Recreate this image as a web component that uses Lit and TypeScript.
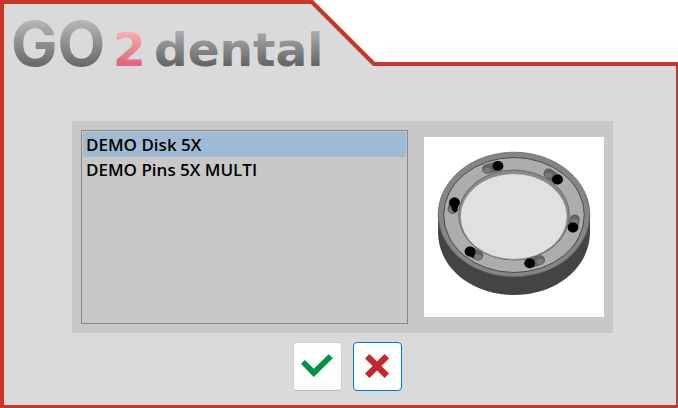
import { LitElement, html, css, svg } from "lit";
import { customElement, property, state } from "lit/decorators.js";

@customElement("brand-logo")
class BrandLogo extends LitElement {
  static styles = css`
    :host { display: block; }
    .logo { display: block; width: 320px; height: 60px; overflow: visible; }
    .word { font-family: "DejaVu Sans", sans-serif; font-weight: 700; }
    .go { font-family: Inter, sans-serif; font-size: 62px; fill: url(#steel); }
    .two { font-size: 47px; fill: url(#rose); }
    .dental { font-size: 47px; fill: url(#steel-low); }
  `;

  render() {
    return html`
      <svg class="logo" viewBox="0 0 320 60" role="img" aria-label="GO2dental">
        <defs>
          <linearGradient id="steel" gradientUnits="userSpaceOnUse" x1="0" y1="9" x2="0" y2="54">
            <stop offset="0" stop-color="#b4b6b8" /><stop offset="1" stop-color="#66686a" />
          </linearGradient>
          <linearGradient id="steel-low" gradientUnits="userSpaceOnUse" x1="0" y1="18" x2="0" y2="54">
            <stop offset="0" stop-color="#acaeb0" /><stop offset="1" stop-color="#626466" />
          </linearGradient>
          <linearGradient id="rose" gradientUnits="userSpaceOnUse" x1="0" y1="20" x2="0" y2="54">
            <stop offset="0" stop-color="#f5b0b0" /><stop offset="1" stop-color="#e2607e" />
          </linearGradient>
        </defs>
        <text class="word go" x="-1" y="54">GO</text>
        <text class="word two" x="101" y="54">2</text>
        <text class="word dental" x="142" y="54">dental</text>
      </svg>
    `;
  }
}

interface Slot {
  from: [number, number];
  pin: [number, number];
}

const SLOTS: Slot[] = [
  { from: [63, 32], pin: [74, 29] },
  { from: [124.5, 36.5], pin: [133.5, 42.5] },
  { from: [28.5, 72], pin: [30.5, 65.5] },
  { from: [150.7, 82.5], pin: [149, 90.5] },
  { from: [54.3, 118.5], pin: [46, 114.5] },
  { from: [116, 123], pin: [105.7, 126.3] },
];

@customElement("disk-preview")
class DiskPreview extends LitElement {
  static styles = css`
    :host { display: block; background: #fff; }
    .disk { display: block; width: 180px; height: 180px; }
    .side { fill: #444; }
    .rim { fill: #858585; stroke: #5c5c5c; stroke-width: 0.7; }
    .face { fill: #adadad; stroke: #4a4a4a; stroke-width: 1; }
    .lip { fill: #8a8a8a; stroke: #6a6a6a; stroke-width: 1; }
    .bore { fill: #e0e0e0; stroke: #777; stroke-width: 0.6; }
    .slot { stroke: #626262; stroke-width: 10; stroke-linecap: round; }
    .floor { fill: #7a7a7a; }
    .pin { fill: #000; }
  `;

  render() {
    return html`
      <svg class="disk" viewBox="0 0 180 180" role="img" aria-label="Disk holder">
        <path class="side" d="M14 77 V95 C14 131 48 158 90 158 C132 158 166 131 166 95 V77 Z" />
        <ellipse class="rim" cx="90" cy="77.5" rx="75.8" ry="62.3" />
        <ellipse class="face" cx="90" cy="78" rx="70.3" ry="57.5" />
        <ellipse class="lip" cx="90" cy="78" rx="55.3" ry="45" />
        <ellipse class="bore" cx="89.7" cy="79.5" rx="53.4" ry="42.9" />
        ${SLOTS.map(
          ({ from, pin }) => svg`
            <line class="slot" x1=${from[0]} y1=${from[1]} x2=${pin[0]} y2=${pin[1]} />
            <ellipse class="floor" cx=${from[0]} cy=${from[1] + 1.5} rx="3.6" ry="2.8" />
            <ellipse class="pin" cx=${pin[0]} cy=${pin[1]} rx="5.4" ry="4.9" />`
        )}
        <path class="pin" d="M27 67 H34 L33.5 74 Q30.5 77 28 73 Z M43 117 L49.5 121 L51 115 Z" />
      </svg>
    `;
  }
}

@customElement("app-root")
class AppRoot extends LitElement {
  @property({ attribute: false }) items = ["DEMO Disk 5X", "DEMO Pins 5X MULTI"];
  @state() private selected = 0;

  static styles = css`
    :host { display: block; --red: #c4372d; }
    * { box-sizing: border-box; }
    .frame {
      min-height: 100vh;
      display: grid;
      padding: 4px 2px 3px 4px;
      background: var(--red);
      clip-path: polygon(0 0, 313px 0, 375px 62px, 100% 62px, 100% 100%, 0 100%);
    }
    .body {
      display: flex;
      flex-direction: column;
      padding: 8px 63px 14px 68px;
      background: #dadada;
      clip-path: polygon(0 0, 307px 0, 369px 62px, 100% 62px, 100% 100%, 0 100%);
    }
    .brand { margin-left: -60px; }
    .panel {
      display: flex;
      gap: 16px;
      margin-top: 49px;
      padding: 9px;
      background: #c8c8c8;
    }
    .list {
      flex: 1;
      min-width: 0;
      height: 194px;
      margin: 0;
      padding: 1px;
      border: 1px solid #828790;
      border-radius: 0;
      outline: none;
      overflow: hidden;
      appearance: none;
      background: #c8c8c8;
      font: 600 17px/25px "Open Sans", "Noto Sans", sans-serif;
      color: #000;
    }
    .item {
      min-height: 25px;
      padding: 1px 3px 0;
      border-radius: 2px;
      font-weight: 600;
      color: #000;
    }
    .item:checked { background: #9fbbd3 linear-gradient(#9fbbd3, #9fbbd3); color: #000; }
    .preview { align-self: center; }
    .actions {
      display: flex;
      justify-content: center;
      gap: 11px;
      margin-top: 9px;
      padding-left: 10px;
    }
    .action {
      width: 49px;
      height: 49px;
      padding: 0;
      border: 1px solid #d0d0d0;
      border-bottom-color: #b8b8b8;
      border-radius: 4px;
      background: #fdfdfd;
    }
    .default { border-color: #0078d4; }
    .glyph { display: block; width: 47px; height: 47px; }
    .ok { fill: #009245; }
    .no { fill: #c1272d; }
  `;

  private onSelect(e: Event) {
    this.selected = (e.target as HTMLSelectElement).selectedIndex;
  }

  render() {
    return html`
      <div class="frame">
        <main class="body">
          <brand-logo class="brand"></brand-logo>
          <section class="panel">
            <select class="list" size="7" aria-label="Holder type" @change=${this.onSelect}>
              ${this.items.map(
                (name, i) => html`<option class="item" ?selected=${i === this.selected}>${name}</option>`
              )}
            </select>
            <disk-preview class="preview"></disk-preview>
          </section>
          <div class="actions">
            <button class="action" type="button" aria-label="OK">
              <svg class="glyph" viewBox="1 1 47 47" aria-hidden="true">
                <path class="ok" d="M8 21.7 L12 18 L20.7 26.7 L35.7 12.2 L39.8 16.3 L20.7 35 Z" />
              </svg>
            </button>
            <button class="action default" type="button" aria-label="Cancel">
              <svg class="glyph" viewBox="1 1 47 47" aria-hidden="true">
                <path class="no" d="M16.4 12 L24 19.6 L31.6 12 L36 16.4 L28.4 24 L36 31.6 L31.6 36 L24 28.4 L16.4 36 L12 31.6 L19.6 24 L12 16.4 Z" />
              </svg>
            </button>
          </div>
        </main>
      </div>
    `;
  }
}
